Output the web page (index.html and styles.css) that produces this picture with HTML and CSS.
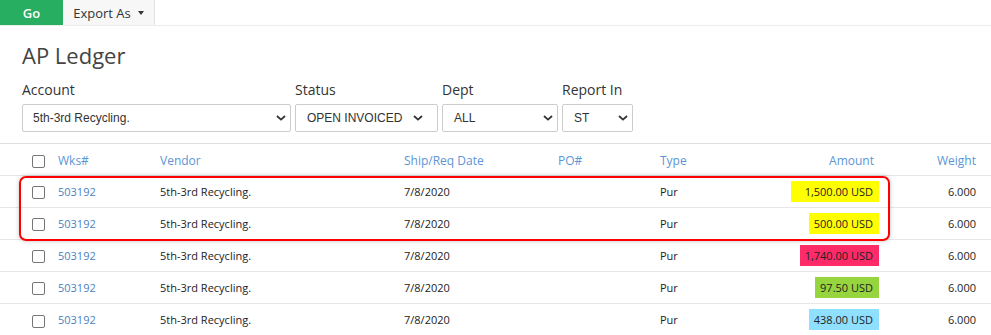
FILE: index.html
```html
<!DOCTYPE html>
<html>
<head>
<meta charset="utf-8">
<link rel="stylesheet" href="styles.css">
</head>
<body>
<div class="topbar">
  <button class="btn-go">Go</button>
  <button class="btn-export">Export As <span class="caret"></span></button>
</div>
<div class="page">
  <h1 class="title">AP Ledger</h1>
  <div class="filters">
    <div class="field f-account">
      <label>Account</label>
      <div class="select"><span>5th-3rd Recycling.</span><svg class="chev" viewBox="0 0 10 6" width="10" height="6"><path d="M1 1 L5 4.6 L9 1" fill="none" stroke="#333" stroke-width="1.8"/></svg></div>
    </div>
    <div class="field f-status">
      <label>Status</label>
      <div class="select"><span>OPEN INVOICED</span><svg class="chev" viewBox="0 0 10 6" width="10" height="6"><path d="M1 1 L5 4.6 L9 1" fill="none" stroke="#333" stroke-width="1.8"/></svg></div>
    </div>
    <div class="field f-dept">
      <label>Dept</label>
      <div class="select"><span>ALL</span><svg class="chev" viewBox="0 0 10 6" width="10" height="6"><path d="M1 1 L5 4.6 L9 1" fill="none" stroke="#333" stroke-width="1.8"/></svg></div>
    </div>
    <div class="field f-report">
      <label>Report In</label>
      <div class="select"><span>ST</span><svg class="chev" viewBox="0 0 10 6" width="10" height="6"><path d="M1 1 L5 4.6 L9 1" fill="none" stroke="#333" stroke-width="1.8"/></svg></div>
    </div>
  </div>
</div>
<div class="table-wrap">
  <table class="ledger">
    <colgroup>
      <col class="c-chk"><col class="c-wks"><col class="c-vendor"><col class="c-date"><col class="c-po"><col class="c-type"><col class="c-amt"><col class="c-wt">
    </colgroup>
    <thead>
      <tr>
        <th class="chk"><span class="cb"></span></th>
        <th>Wks#</th>
        <th>Vendor</th>
        <th>Ship/Req Date</th>
        <th>PO#</th>
        <th>Type</th>
        <th class="num">Amount</th>
        <th class="num wt">Weight</th>
      </tr>
    </thead>
    <tbody>
      <tr>
        <td class="chk"><span class="cb"></span></td>
        <td><a class="link">503192</a></td>
        <td>5th-3rd Recycling.</td>
        <td>7/8/2020</td>
        <td></td>
        <td>Pur</td>
        <td class="num"><span class="badge yellow wide">1,500.00 USD</span></td>
        <td class="num wt">6.000</td>
      </tr>
      <tr>
        <td class="chk"><span class="cb"></span></td>
        <td><a class="link">503192</a></td>
        <td>5th-3rd Recycling.</td>
        <td>7/8/2020</td>
        <td></td>
        <td>Pur</td>
        <td class="num"><span class="badge yellow">500.00 USD</span></td>
        <td class="num wt">6.000</td>
      </tr>
      <tr>
        <td class="chk"><span class="cb"></span></td>
        <td><a class="link">503192</a></td>
        <td>5th-3rd Recycling.</td>
        <td>7/8/2020</td>
        <td></td>
        <td>Pur</td>
        <td class="num"><span class="badge pink">1,740.00 USD</span></td>
        <td class="num wt">6.000</td>
      </tr>
      <tr>
        <td class="chk"><span class="cb"></span></td>
        <td><a class="link">503192</a></td>
        <td>5th-3rd Recycling.</td>
        <td>7/8/2020</td>
        <td></td>
        <td>Pur</td>
        <td class="num"><span class="badge green">97.50 USD</span></td>
        <td class="num wt">6.000</td>
      </tr>
      <tr>
        <td class="chk"><span class="cb"></span></td>
        <td><a class="link">503192</a></td>
        <td>5th-3rd Recycling.</td>
        <td>7/8/2020</td>
        <td></td>
        <td>Pur</td>
        <td class="num"><span class="badge blue">438.00 USD</span></td>
        <td class="num wt">6.000</td>
      </tr>
    </tbody>
  </table>
  <div class="highlight"></div>
</div>
</body>
</html>
```
FILE: styles.css
```css
* { box-sizing: border-box; }
html, body { margin: 0; padding: 0; background: #fff; }
body {
  font-family: "Open Sans", "Liberation Sans", sans-serif;
  color: #222;
  overflow: hidden;
}
.topbar {
  display: flex;
  height: 26px;
  border-bottom: 1px solid #ececec;
}
.topbar button {
  border: 0;
  margin: 0;
  font-family: "Open Sans", sans-serif;
  font-size: 13px;
  height: 25px;
  padding: 0;
  cursor: pointer;
}
.btn-go {
  width: 63px;
  background: #27ae60;
  color: #fff;
  font-weight: 600;
}
.btn-export {
  width: 92px;
  background: #f7f7f7;
  color: #333;
  border-right: 1px solid #e3e3e3 !important;
  display: flex;
  align-items: center;
  justify-content: center;
  gap: 4px;
}
.caret {
  display: inline-block;
  width: 0;
  height: 0;
  border-left: 3.5px solid transparent;
  border-right: 3.5px solid transparent;
  border-top: 4px solid #333;
  margin-left: 3px;
  margin-top: 1px;
}
.page { padding: 0 22px; }
.title {
  margin: 0;
  padding-top: 15px;
  font-size: 22px;
  font-weight: 400;
  color: #444;
  line-height: 28px;
}
.filters {
  display: flex;
  gap: 4px;
  margin-top: 12px;
}
.field { display: flex; flex-direction: column; }
.field label {
  font-size: 14px;
  color: #333;
  line-height: 18px;
  margin-bottom: 5px;
}
.select {
  height: 28px;
  border: 1px solid #ccc;
  border-radius: 2px;
  display: flex;
  align-items: center;
  justify-content: space-between;
  padding: 0 4px 0 10px;
  font-family: "Liberation Sans", Arial, sans-serif;
  font-size: 12px;
  color: #333;
}
.chev { flex: none; }
.f-account .select { width: 269px; }
.f-status .select { width: 143px; padding-right: 14px; }
.f-dept .select { width: 116px; }
.f-report .select { width: 71px; }
.f-report .select, .f-dept .select, .f-status .select { padding-left: 11px; }

.table-wrap {
  position: relative;
  margin-top: 11px;
}
.ledger {
  width: 100%;
  table-layout: fixed;
  border-collapse: collapse;
  font-size: 11px;
}
.c-chk { width: 50px; }
.c-wks { width: 102px; }
.c-vendor { width: 244px; }
.c-date { width: 154px; }
.c-po { width: 102px; }
.c-type { width: 88px; }
.c-amt { width: 148px; }
.c-wt { width: 103px; }
.ledger th, .ledger td {
  padding: 0 8px;
  text-align: left;
  vertical-align: middle;
  white-space: nowrap;
  border-top: 1px solid #e6e6e6;
}
.ledger thead th {
  height: 32px;
  border-top: 1px solid #dedede;
  font-weight: 400;
  font-size: 12px;
  color: #5b95d6;
  padding-top: 2px;
}
.ledger thead th.num:not(.wt) { padding-right: 14px; }
.ledger tbody td { height: 32px; color: #222; }
.ledger .chk { padding-left: 32px; padding-right: 0; }
.ledger .num { text-align: right; }
.ledger .wt { padding-right: 15px; }
.ledger tbody .num:not(.wt) { padding-right: 9px; }
.cb {
  display: inline-block;
  width: 13px;
  height: 13px;
  border: 1px solid #767676;
  border-radius: 2px;
  background: #fff;
  vertical-align: middle;
}
.link { color: #4a7fc0; text-decoration: none; }
.badge {
  display: inline-block;
  padding: 3px 6px 3px 5px;
  line-height: 15px;
  color: #222;
}
.badge.wide { padding-left: 14px; }
.yellow { background: #ffff00; }
.pink { background: #ff2a68; }
.green { background: #96d53e; }
.blue { background: #8fe0ff; }
.highlight {
  position: absolute;
  left: 19px;
  top: 33px;
  width: 871px;
  height: 65px;
  border: 2px solid #f00;
  border-radius: 7px;
  box-shadow: 0 0 4px rgba(0,0,0,0.25);
  pointer-events: none;
}
```
